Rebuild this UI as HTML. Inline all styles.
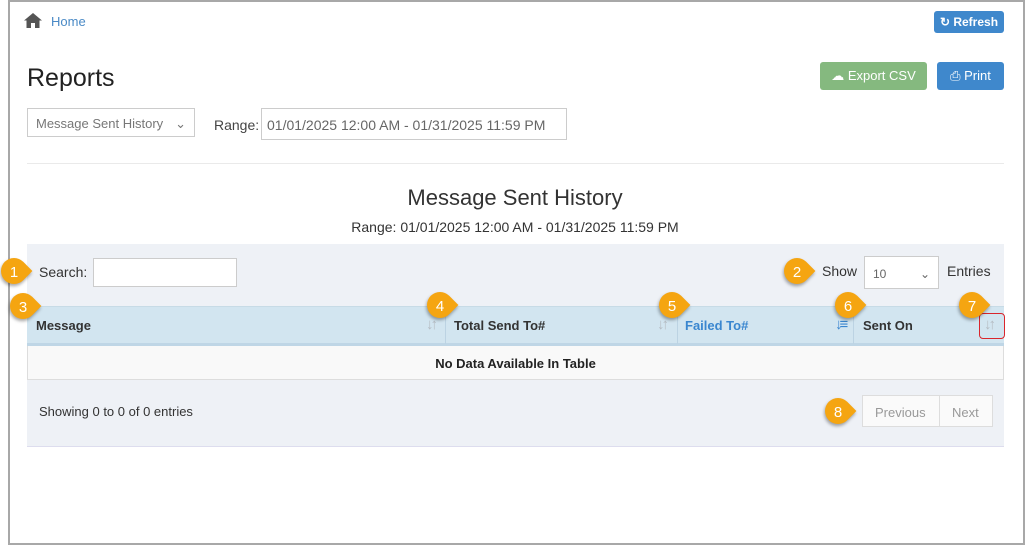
<!DOCTYPE html>
<html><head><style>
*{box-sizing:border-box;margin:0;padding:0}
body{width:1028px;height:546px;background:#fff;font-family:"Liberation Sans",sans-serif;position:relative;overflow:hidden;color:#333}
.frame{position:absolute;left:8px;top:0;width:1017px;height:545px;border:2px solid #a8a8a8}
.abs{position:absolute}
.btn{position:absolute;color:#fff;border-radius:3px;font-size:13px;display:flex;align-items:center;justify-content:center;gap:4px}
.badge{position:absolute;width:26px;height:26px;background:#f5a511;border-radius:50% 0 50% 50%;transform:rotate(45deg);box-shadow:1px 2px 3px rgba(0,0,0,.35)}
.bn{position:absolute;width:26px;height:26px;color:#fff;font-size:15px;text-align:center;line-height:27px;padding-top:1px}
.sort{position:absolute;color:#b5bcc3;font-size:15px;font-weight:bold;letter-spacing:-3px}
</style></head><body>
<div class="frame"></div>
<svg class="abs" style="left:24px;top:13px" width="18" height="15" viewBox="0 0 18 15"><path d="M9 0L0 7.5h2.5V15h4.5v-5h4v5h4.5V7.5H18z" fill="#555"/></svg>
<div class="abs" style="left:51px;top:14px;font-size:13px;color:#4a8ac6">Home</div>
<div class="btn" style="left:934px;top:11px;width:70px;height:22px;background:#3f88cc;font-size:12px;font-weight:bold">&#x21bb; Refresh</div>
<div class="abs" style="left:27px;top:64px;font-size:25px;color:#222">Reports</div>
<div class="btn" style="left:820px;top:62px;width:107px;height:28px;background:#85b97f;font-size:13px">&#9729; Export CSV</div>
<div class="btn" style="left:937px;top:62px;width:67px;height:28px;background:#3f88cc;font-size:13px">&#9113; Print</div>
<div class="abs" style="left:27px;top:108px;width:168px;height:29px;border:1px solid #ccc;font-size:13px;color:#777;padding:7px 8px">Message Sent History <span style="float:right">&#8964;</span></div>
<div class="abs" style="left:214px;top:117px;font-size:14px;color:#444">Range:</div>
<div class="abs" style="left:261px;top:108px;width:306px;height:32px;border:1px solid #ccc;font-size:14px;color:#666;padding:8px 5px">01/01/2025 12:00 AM - 01/31/2025 11:59 PM</div>
<div class="abs" style="left:27px;top:163px;width:977px;height:1px;background:#eaeaea"></div>
<div class="abs" style="left:0;width:1030px;top:185px;text-align:center;font-size:22px;color:#333">Message Sent History</div>
<div class="abs" style="left:0;width:1030px;top:219px;text-align:center;font-size:14px;color:#333">Range: 01/01/2025 12:00 AM - 01/31/2025 11:59 PM</div>
<div class="abs" style="left:27px;top:244px;width:977px;height:203px;background:#eef1f6;border-bottom:1px solid #dde"></div>
<div class="abs" style="left:39px;top:264px;font-size:14px">Search:</div>
<div class="abs" style="left:93px;top:258px;width:144px;height:29px;background:#fff;border:1px solid #ccc"></div>
<div class="abs" style="left:822px;top:263px;font-size:14px">Show</div>
<div class="abs" style="left:864px;top:256px;width:75px;height:33px;background:#fff;border:1px solid #ccc;font-size:12px;color:#666;padding:10px 8px">10<span style="float:right">&#8964;</span></div>
<div class="abs" style="left:947px;top:263px;font-size:14px">Entries</div>
<div class="abs" style="left:27px;top:306px;width:977px;height:40px;background:#d2e5f0;border-top:1px solid #c7dbe6;border-bottom:3px solid #bfd6e6"></div>
<div class="abs" style="left:445px;top:307px;width:1px;height:37px;background:#bcd3e3"></div>
<div class="abs" style="left:677px;top:307px;width:1px;height:37px;background:#bcd3e3"></div>
<div class="abs" style="left:853px;top:307px;width:1px;height:37px;background:#bcd3e3"></div>
<div class="abs" style="left:36px;top:318px;font-size:13px;font-weight:bold;color:#333">Message</div>
<div class="abs" style="left:454px;top:318px;font-size:13px;font-weight:bold;color:#333">Total Send To#</div>
<div class="abs" style="left:685px;top:318px;font-size:13px;font-weight:bold;color:#3a86cf">Failed To#</div>
<div class="abs" style="left:863px;top:318px;font-size:13px;font-weight:bold;color:#333">Sent On</div>
<div class="sort" style="left:426px;top:316px">&#8595;&#8593;</div>
<div class="sort" style="left:657px;top:316px">&#8595;&#8593;</div>
<div class="sort" style="left:835px;top:316px;color:#3a86cf">&#8595;&#8801;</div>
<div class="abs" style="left:979px;top:313px;width:26px;height:26px;border:1px solid #d9262c;border-radius:4px"></div>
<div class="sort" style="left:984px;top:316px">&#8595;&#8593;</div>
<div class="abs" style="left:27px;top:346px;width:977px;height:34px;background:#f9f9f9;border:1px solid #ddd;border-top:none;text-align:center;font-size:13px;font-weight:bold;padding-top:10px;color:#222">No Data Available In Table</div>
<div class="abs" style="left:39px;top:404px;font-size:13px;color:#333">Showing 0 to 0 of 0 entries</div>
<div class="abs" style="left:862px;top:395px;width:131px;height:32px;background:#fafafa;border:1px solid #ddd;font-size:13px;color:#999">
<span class="abs" style="left:12px;top:9px">Previous</span><span class="abs" style="left:76px;top:0;width:1px;height:30px;background:#ddd"></span><span class="abs" style="left:89px;top:9px">Next</span></div>
<div class="badge" style="left:1px;top:258px"></div><div class="bn" style="left:1px;top:258px">1</div>
<div class="badge" style="left:784px;top:258px"></div><div class="bn" style="left:784px;top:258px">2</div>
<div class="badge" style="left:10px;top:293px"></div><div class="bn" style="left:10px;top:293px">3</div>
<div class="badge" style="left:427px;top:292px"></div><div class="bn" style="left:427px;top:292px">4</div>
<div class="badge" style="left:659px;top:292px"></div><div class="bn" style="left:659px;top:292px">5</div>
<div class="badge" style="left:835px;top:292px"></div><div class="bn" style="left:835px;top:292px">6</div>
<div class="badge" style="left:959px;top:292px"></div><div class="bn" style="left:959px;top:292px">7</div>
<div class="badge" style="left:825px;top:398px"></div><div class="bn" style="left:825px;top:398px">8</div>
</body></html>
